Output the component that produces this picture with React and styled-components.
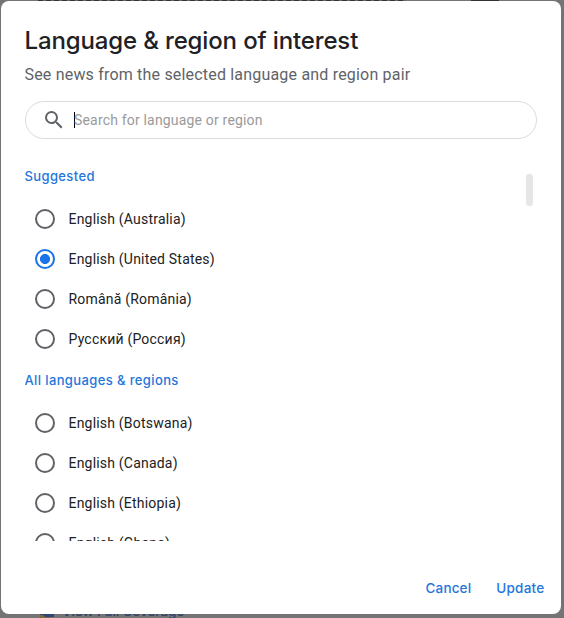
import React, { useState } from "react";
import styled, { createGlobalStyle } from "styled-components";

const suggested = [
  "English (Australia)",
  "English (United States)",
  "Română (România)",
  "Русский (Россия)",
];

const allLanguages = [
  "English (Botswana)",
  "English (Canada)",
  "English (Ethiopia)",
  "English (Ghana)",
];

const LanguageOption = ({ label, checked, onSelect }) => (
  <OptionStyled>
    <input
      type="radio"
      name="language"
      checked={checked}
      onChange={() => onSelect(label)}
    />
    <span>{label}</span>
  </OptionStyled>
);

const App = () => {
  const [selected, setSelected] = useState("English (United States)");

  const renderOptions = (items) =>
    items.map((label) => (
      <LanguageOption
        key={label}
        label={label}
        checked={selected === label}
        onSelect={setSelected}
      />
    ));

  return (
    <>
      <GlobalStyle />
      <PageStyled>
        <CoverageLink>
          <svg width="14" height="14" viewBox="0 0 14 14">
            <rect width="14" height="13" fill="#2f4677" />
            <path d="M0 11h3l2 2h6v1H0z" fill="#7c6a3c" />
          </svg>
          View Full Coverage
        </CoverageLink>

        <DialogStyled>
          <h1>Language &amp; region of interest</h1>
          <p>See news from the selected language and region pair</p>

          <SearchBox>
            <svg width="24" height="24" viewBox="0 0 24 24" fill="#5f6368">
              <path d="M15.5 14h-.79l-.28-.27A6.471 6.471 0 0 0 16 9.5 6.5 6.5 0 1 0 9.5 16c1.61 0 3.09-.59 4.23-1.57l.27.28v.79l5 4.99L20.49 19l-4.99-5zm-6 0C7.01 14 5 11.99 5 9.5S7.01 5 9.5 5 14 7.01 14 9.5 11.99 14 9.5 14z" />
            </svg>
            <Caret />
            <span>Search for language or region</span>
          </SearchBox>

          <ListStyled>
            <OptionGroup>
              <h2>Suggested</h2>
              {renderOptions(suggested)}
              <h2>All languages &amp; regions</h2>
              {renderOptions(allLanguages)}
            </OptionGroup>
            <ScrollThumb />
          </ListStyled>

          <ActionsStyled>
            <TextButton $spacing="0.15px">Cancel</TextButton>
            <TextButton $spacing="0.25px">Update</TextButton>
          </ActionsStyled>
        </DialogStyled>
      </PageStyled>
    </>
  );
};

const GlobalStyle = createGlobalStyle`
  * {
    box-sizing: border-box;
    margin: 0;
    padding: 0;
  }

  body {
    background: #747476;
    font-family: Roboto, sans-serif;
    overflow: hidden;
  }
`;

const PageStyled = styled.div`
  position: relative;
  height: 618px;
  padding: 1px 3px 4px 1px;
  overflow: hidden;
  background: repeating-linear-gradient(
        90deg,
        #343436 0 5px,
        #68686a 5px 8px
      )
      38px 0 / 368px 1px no-repeat,
    linear-gradient(#343036, #343036) 471px 0 / 28px 1px no-repeat, #747476;
`;

const CoverageLink = styled.div`
  position: absolute;
  left: 40px;
  top: 603px;
  display: flex;
  align-items: center;
  gap: 8px;
  font: 500 13.5px/16px Inter, sans-serif;
  letter-spacing: -0.1px;
  color: #2c4268;
`;

const DialogStyled = styled.section`
  position: relative;
  display: flex;
  flex-direction: column;
  height: 613px;
  padding: 24px 24px 12px;
  border-radius: 8px;
  background: #fff;

  h1 {
    margin-left: -0.5px;
    font: 500 24px/32px Inter, sans-serif;
    letter-spacing: -0.14px;
    color: #202124;
    white-space: nowrap;
  }

  p {
    margin-top: 6px;
    margin-left: -0.5px;
    font-size: 16px;
    line-height: 24px;
    letter-spacing: 0.19px;
    color: #5f6368;
    white-space: nowrap;
  }
`;

const SearchBox = styled.div`
  display: flex;
  flex: none;
  align-items: center;
  height: 38px;
  margin-top: 14px;
  padding-left: 15.5px;
  border: 1px solid #dadce0;
  border-radius: 19px;

  span {
    font-size: 14px;
    letter-spacing: 0.18px;
    color: #9a9a9a;
  }
`;

const Caret = styled.i`
  width: 1px;
  height: 16px;
  margin-left: 8.5px;
  margin-right: -1px;
  background: #000;
`;

const ListStyled = styled.div`
  display: flex;
  justify-content: space-between;
  flex: none;
  height: 381px;
  margin-top: 21px;
  padding-right: 4px;
  overflow: hidden;
`;

const OptionGroup = styled.div`
  h2 {
    padding-top: 6px;
    height: 39px;
    margin-left: -0.5px;
    font: 550 13px/20px Inter, sans-serif;
    letter-spacing: 0.38px;
    color: #2476dc;
    white-space: nowrap;
  }

  label + h2 {
    height: 44px;
    padding-top: 11px;
  }
`;

const OptionStyled = styled.label`
  display: flex;
  align-items: center;
  height: 40px;
  padding-left: 10px;
  font-size: 14px;
  letter-spacing: 0.2px;
  color: #202124;
  white-space: nowrap;

  input {
    appearance: none;
    width: 20px;
    height: 20px;
    margin-right: 13.5px;
    border: 2px solid #5f6368;
    border-radius: 50%;

    &:checked {
      border-color: #1a73e8;
      background: radial-gradient(circle, #1a73e8 4.7px, transparent 5.3px);
    }
  }
`;

const ScrollThumb = styled.div`
  width: 7px;
  height: 32px;
  margin-top: 14px;
  border-radius: 3px;
  background: #e6e6e6;
`;

const ActionsStyled = styled.div`
  display: flex;
  justify-content: flex-end;
  gap: 25px;
  margin-top: auto;
  margin-right: -7.5px;
`;

const TextButton = styled.button`
  height: 28px;
  border: none;
  background: none;
  font: 550 13.5px/28px Inter, sans-serif;
  letter-spacing: ${({ $spacing }) => $spacing};
  color: #2476dc;
`;

export default App;
